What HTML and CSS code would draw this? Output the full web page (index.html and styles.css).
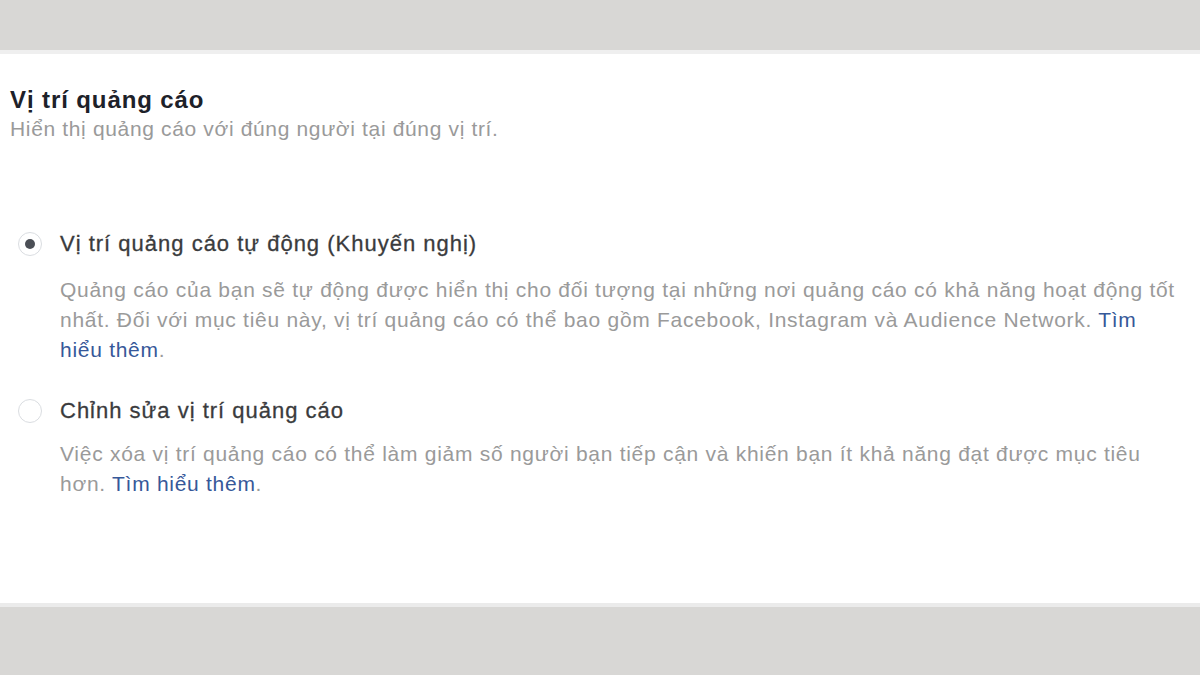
FILE: index.html
```html
<!DOCTYPE html>
<html lang="vi">
<head>
<meta charset="utf-8">
<link rel="stylesheet" href="styles.css">
</head>
<body>
<div class="topbar"></div>
<main class="panel">
  <header class="head">
    <h1 class="title">Vị trí quảng cáo</h1>
    <p class="subtitle">Hiển thị quảng cáo với đúng người tại đúng vị trí.</p>
  </header>
  <section class="options">
    <div class="option">
      <div class="row">
        <span class="radio checked"></span>
        <span class="label">Vị trí quảng cáo tự động (Khuyến nghị)</span>
      </div>
      <p class="desc">Quảng cáo của bạn sẽ tự động được hiển thị cho đối tượng tại những nơi quảng cáo có khả năng hoạt động tốt nhất. Đối với mục tiêu này, vị trí quảng cáo có thể bao gồm Facebook, Instagram và Audience Network. <a class="link">Tìm hiểu thêm</a>.</p>
    </div>
    <div class="option">
      <div class="row">
        <span class="radio"></span>
        <span class="label">Chỉnh sửa vị trí quảng cáo</span>
      </div>
      <p class="desc">Việc xóa vị trí quảng cáo có thể làm giảm số người bạn tiếp cận và khiến bạn ít khả năng đạt được mục tiêu hơn. <a class="link">Tìm hiểu thêm</a>.</p>
    </div>
  </section>
</main>
<div class="bottombar"></div>
</body>
</html>
```

FILE: styles.css
```css
html, body {
  margin: 0;
  padding: 0;
  height: 100%;
  background: #d8d7d5;
  font-family: "Liberation Sans", Arial, sans-serif;
}
body {
  display: flex;
  flex-direction: column;
}
.topbar {
  height: 50px;
  background: #d8d7d5;
  border-bottom: 4px solid #efefef;
  flex: none;
}
.panel {
  background: #fff;
  height: 553px;
  flex: none;
  padding: 0 10px;
  box-sizing: border-box;
  border-bottom: 4px solid #ebebeb;
}
.head {
  padding-top: 32px;
}
.title {
  margin: 0;
  font-size: 24px;
  font-weight: bold;
  letter-spacing: 0.9px;
  color: #1d2129;
  line-height: 28px;
}
.subtitle {
  margin: 2px 0 0;
  font-size: 21px;
  letter-spacing: 0.65px;
  color: #9a9a9a;
  line-height: 26px;
}
.options {
  padding-top: 87px;
}
.option {
  margin-bottom: 31px;
}
.row {
  display: flex;
  align-items: center;
  gap: 18px;
  height: 30px;
}
.radio {
  width: 24px;
  height: 24px;
  border-radius: 50%;
  border: 1px solid #dadde1;
  box-sizing: border-box;
  margin-left: 8px;
  display: flex;
  align-items: center;
  justify-content: center;
  flex: none;
}
.radio.checked::after {
  content: "";
  width: 10px;
  height: 10px;
  border-radius: 50%;
  background: #4b4f56;
}
.label {
  font-size: 22px;
  letter-spacing: 1px;
  color: #3a3b3d;
  -webkit-text-stroke: 0.3px #3a3b3d;
}
.desc {
  margin: 16px 0 0 50px;
  width: 1124px;
  font-size: 21px;
  letter-spacing: 0.72px;
  line-height: 30px;
  color: #9a9a9a;
}
.option + .option .desc {
  margin-top: 13px;
}
.link {
  color: #365899;
}
.bottombar {
  flex: 1;
  background: #d8d7d5;
}
```
